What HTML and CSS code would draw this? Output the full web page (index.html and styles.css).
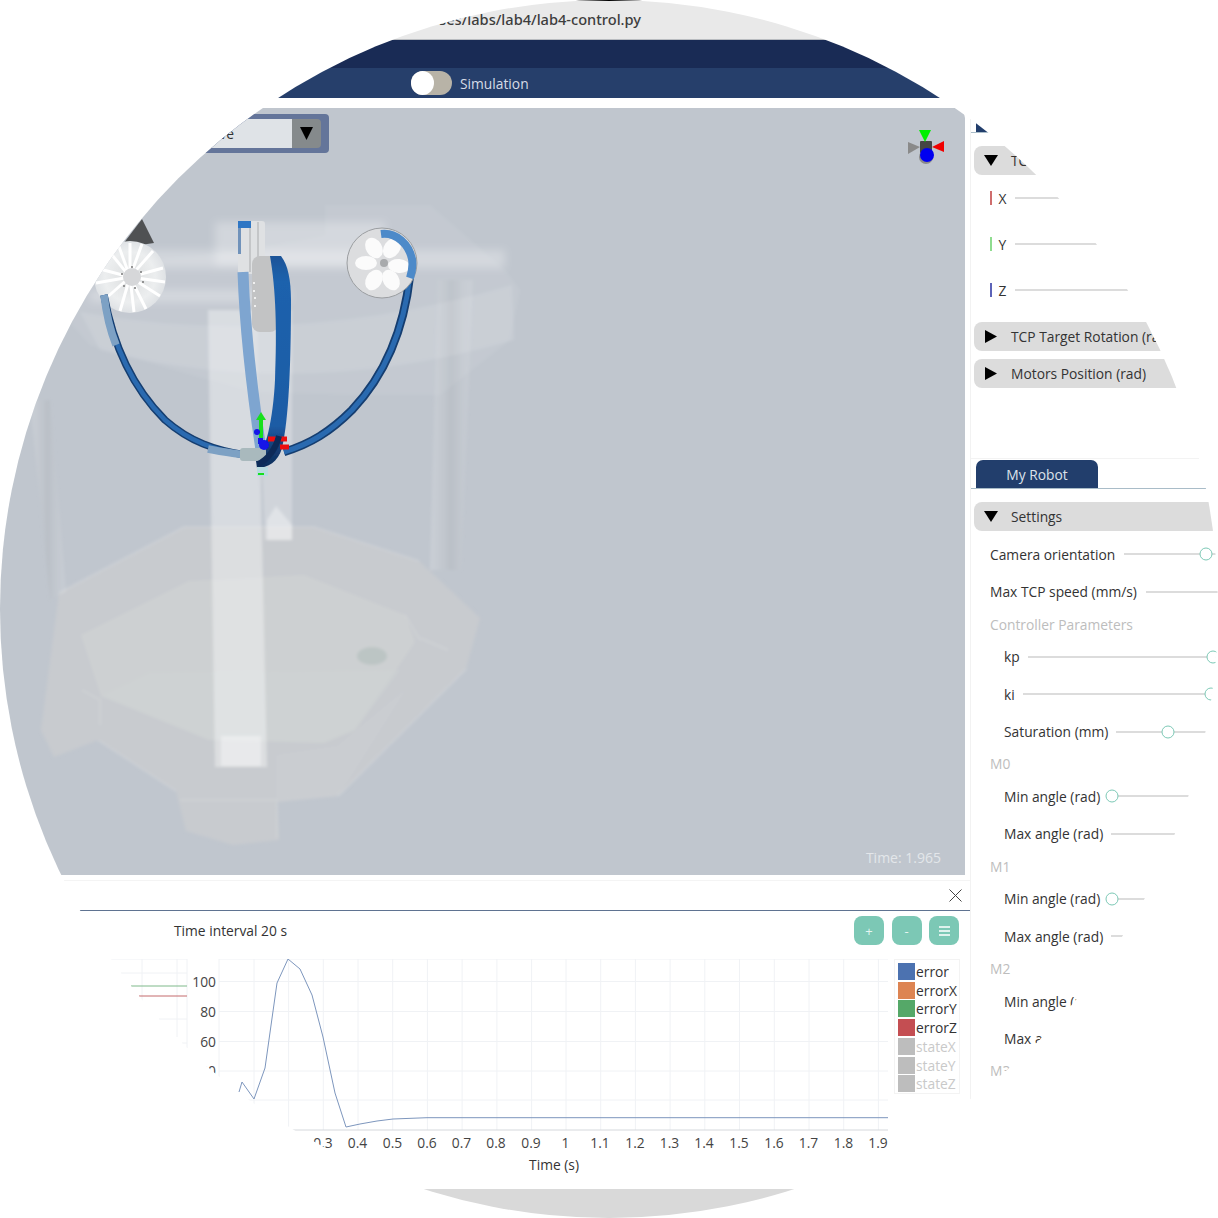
FILE: index.html
```html
<!DOCTYPE html>
<html lang="en">
<head>
<meta charset="utf-8">
<title>lab4-control</title>
<link rel="stylesheet" href="styles.css">
</head>
<body>
<div class="screen">
  <div class="topline"></div>
  <div class="pathbar"><span>courses/labs/lab4/lab4-control.py</span></div>
  <div class="navy"></div>
  <div class="simbar">
    <span class="toggle"><span class="knob"></span></span>
    <span class="simlabel">Simulation</span>
  </div>
  <div class="workspace">
    <div class="leftcol">
      <div class="viewer">
        <svg class="scene" width="965" height="767" viewBox="0 108 965 767">
          <defs>
            <filter id="soft"><feGaussianBlur stdDeviation="0.6"/></filter>
            <filter id="softer"><feGaussianBlur stdDeviation="1.6"/></filter>
            <filter id="haze"><feGaussianBlur stdDeviation="4"/></filter>
            <linearGradient id="column" x1="0" x2="1" y1="0" y2="0">
              <stop offset="0" stop-color="#fff" stop-opacity=".16"/>
              <stop offset=".5" stop-color="#a4a9ae" stop-opacity=".22"/>
              <stop offset="1" stop-color="#fff" stop-opacity=".1"/>
            </linearGradient>
            <linearGradient id="band" x1="0" x2="0" y1="0" y2="1">
              <stop offset="0" stop-color="#1a5498"/>
              <stop offset=".12" stop-color="#1e62ad"/>
              <stop offset=".8" stop-color="#1d5ca5"/>
              <stop offset=".9" stop-color="#143f78"/>
              <stop offset="1" stop-color="#0e2c58"/>
            </linearGradient>
            <radialGradient id="burst" cx=".5" cy=".5" r=".5">
              <stop offset="0" stop-color="#dcdedf"/>
              <stop offset=".7" stop-color="#eceeef"/>
              <stop offset="1" stop-color="#dfe2e5"/>
            </radialGradient>
          </defs>
          <g filter="url(#softer)">
            <polygon class="lower" points="184,527 314,527 419,561 480,618 466,669 338,796 277,802 279,840 233,845 186,831 176,791 98,740 54,757 41,730 59,593"/>
            <polygon class="plate" points="81,635 189,581 304,575 405,615 415,642 355,730 324,743 209,740 101,696"/>
            <polygon class="plate2" points="101,696 150,672 400,670 355,730 324,743 209,740"/>
            <ellipse class="dot" cx="372" cy="656" rx="15" ry="9"/>
            <path class="edge" d="M59 593L184 527H314L419 561M405 615L420 640M466 669L338 796M278 800H180M98 740L176 791M82 690L100 700L100 725M277 802V838M420 638L448 650"/>
            <polygon class="footblock" points="277,755 338,746 405,690 338,796 277,802"/>
            <polygon class="column" points="30,400 50,400 66,592 50,600"/>
            <polygon class="column" points="438,280 473,280 461,570 430,570"/>
            <polygon class="upper" points="325,205 430,205 505,270 520,290 510,340 440,395 360,395 250,392 90,345 50,300 105,265 250,250 325,235"/>
            <path class="rim" d="M80 312 Q290 350 512 285 L514 340 Q300 402 100 350Z"/>
            <polygon class="plank" points="208,310 257,310 267,767 215,767"/>
            <polygon class="plank2" points="256,310 292,310 292,540 265,540"/>
            <rect class="brightblock" x="221" y="736" width="40" height="30"/>
            <polygon class="brightblock" points="267,520 276,506 292,525 292,540 267,540"/>
          </g>
          <g filter="url(#haze)">
            <rect class="glow" x="105" y="250" width="400" height="18"/>
            <rect class="glow" x="215" y="222" width="170" height="44"/>
            <rect class="glow" x="90" y="290" width="200" height="12"/>
          </g>
          <g filter="url(#soft)">
            <polygon class="cone" points="142,219 154,243 120,248"/>
            <circle class="disc" cx="130" cy="277" r="36"/>
            <g class="spokes">
              <path d="M130 277L130 243M130 277L142 244M130 277L153 251M130 277L163 268M130 277L165 282M130 277L160 296M130 277L146 309M130 277L134 312M130 277L120 311M130 277L104 300M130 277L96 283M130 277L96 268M130 277L108 250M130 277L118 244"/>
            </g>
            <circle class="hub" cx="132" cy="277" r="9"/>
            <g class="pins">
              <circle cx="132" cy="267" r="1"/><circle cx="141" cy="272" r="1"/><circle cx="143" cy="282" r="1"/><circle cx="135" cy="288" r="1"/><circle cx="124" cy="286" r="1"/><circle cx="122" cy="274" r="1"/>
            </g>
            <path class="cable-edge" d="M104 295C112 340 130 385 165 420C190 442 215 450 245 455"/>
            <path class="cable-left" d="M104 295C112 340 130 385 165 420C190 442 215 450 245 455"/>
            <path class="cable-left-light" d="M104 295C106 312 110 330 116 345M208 449C222 452 232 453 245 455"/>
            <path class="cable-edge wide" d="M410 275C404 330 385 375 352 410C330 432 310 444 284 452"/>
            <path class="cable-right" d="M410 275C404 330 385 375 352 410C330 432 310 444 284 452"/>
            <rect class="motorback" x="238" y="221" width="27" height="53" rx="3"/>
            <path class="motorshade" d="M250 222V272M258 222V262"/>
            <rect class="patch" x="238" y="221" width="13" height="7"/>
            <rect class="strip-light" x="238" y="228" width="3" height="26"/>
            <path class="strap" d="M243 272C245 330 252 390 261 450"/>
            <rect class="motorface" x="252" y="256" width="26" height="76" rx="8"/>
            <circle class="tick" cx="254" cy="283" r="1"/><circle class="tick" cx="254" cy="291" r="1"/><circle class="tick" cx="255" cy="298" r="1"/><circle class="tick" cx="255" cy="306" r="1"/>
            <path class="thickband" d="M270 256H281C288 265 291 280 291 300C291 360 289 420 282 448C278 462 268 468 257 468L256 461C266 450 273 420 275 380C277 330 276 290 270 256Z"/>
            <rect class="connector" x="240" y="448" width="26" height="13" rx="3"/>
            <rect class="lowertip" x="257" y="467" width="11" height="9"/>
            <path class="greenaxis" d="M261 440V418"/><polygon class="greentip" points="261,412 266,420 256,420"/>
            <path class="tipmark" d="M258 474H264"/>
            <circle class="blueblob" cx="264" cy="445" r="5"/><circle class="blueblob" cx="257" cy="432" r="3"/><rect class="blueblob" x="258" y="438" width="5" height="6"/>
            <path class="redaxis" d="M268 439H287M280 447H289"/>
            <path class="thickband-front" d="M258 464C268 460 276 448 279 436"/>
            <circle class="rmotor" cx="382" cy="263" r="35"/>
            <g class="petals">
              <ellipse cx="392" cy="248" rx="8" ry="11" transform="rotate(35 392 248)"/>
              <ellipse cx="399" cy="266" rx="7" ry="11" transform="rotate(95 399 266)"/>
              <ellipse cx="391" cy="280" rx="8" ry="11" transform="rotate(150 391 280)"/>
              <ellipse cx="374" cy="280" rx="8" ry="11" transform="rotate(30 374 280)"/>
              <ellipse cx="366" cy="263" rx="7" ry="11" transform="rotate(90 366 263)"/>
              <ellipse cx="374" cy="248" rx="8" ry="11" transform="rotate(-30 374 248)"/>
            </g>
            <circle class="hub2" cx="384" cy="263" r="4"/>
            <path class="rarc" d="M381 234C397 232 409 245 412 259C413 265 412 272 410 278"/>
          </g>
        </svg>
        <div class="camselect">
          <div class="camfield">Perspective</div>
          <div class="camcaret"><svg width="13" height="13" viewBox="0 0 13 13"><polygon points="0,0 13,0 6.5,13"/></svg></div>
        </div>
        <svg class="gizmo" width="40" height="40" viewBox="906 127 40 40">
          <circle class="g-gray" cx="926" cy="157" r="7"/>
          <polygon class="g-gray" points="908,142 920,147 908,154"/>
          <rect class="g-dark" x="920" y="141" width="12" height="12" rx="1"/>
          <polygon class="g-green" points="919,130 931,130 925,142"/>
          <polygon class="g-red" points="944,141 944,152 932,147"/>
          <circle class="g-blue" cx="927" cy="155" r="7"/>
        </svg>
        <div class="timestamp">Time: 1.965</div>
      </div>
      <div class="chartpanel">
        <div class="closerow">
          <svg class="closeicon" width="13" height="13" viewBox="0 0 13 13"><path d="M0.5 0.5L12.5 12.5M12.5 0.5L0.5 12.5"/></svg>
        </div>
        <div class="toolbar">
          <span class="interval">Time interval 20 s</span>
          <div class="tools">
            <button class="tool">+</button>
            <button class="tool">-</button>
            <button class="tool menu"><svg width="11" height="10" viewBox="0 0 11 10"><path d="M0 1H11M0 5H11M0 9H11"/></svg></button>
          </div>
        </div>
        <div class="chartrow">
          <svg class="plot" width="889" height="216" viewBox="0 959 889 216">
            <path class="grid" d="M111 959H187M121 973H187M159 1019H187M182 1043H187M142 959V1037M177 959V1037M187 959V1048"/>
            <path class="trace-green" d="M131 986H187"/>
            <path class="trace-red" d="M139 996H187"/>
            <path class="grid" d="M219 959H888M219 981.5H888M219 1011.5H888M219 1041.5H888M219 1071H888M219 1100H888M219 959V1130M254 959V1130M288.6 959V1130M323.3 959V1130M358 959V1130M392.7 959V1130M427.4 959V1130M462.1 959V1130M496.9 959V1130M531.6 959V1130M566 959V1130M600.7 959V1130M635.4 959V1130M670.1 959V1130M704.8 959V1130M739.5 959V1130M774.3 959V1130M809 959V1130M843.7 959V1130M878.4 959V1130"/>
            <path class="axis" d="M219 1130H888"/>
            <path class="trace" d="M239 1092L242 1082L254 1099L265 1068L277 983L288 959L300 969L312 995L323 1037L335 1093L346 1127L360 1124L377 1121L393 1119L427 1117.7H888"/>
            <g class="ylabels">
              <text x="216" y="987">100</text><text x="216" y="1017">80</text><text x="216" y="1047">60</text><text x="216" y="1076">40</text>
            </g>
            <g class="xlabels">
              <text x="323" y="1148">0.3</text><text x="357.5" y="1148">0.4</text><text x="392.5" y="1148">0.5</text><text x="427" y="1148">0.6</text><text x="461.5" y="1148">0.7</text><text x="496" y="1148">0.8</text><text x="531" y="1148">0.9</text><text x="565.5" y="1148">1</text><text x="600" y="1148">1.1</text><text x="635" y="1148">1.2</text><text x="669.5" y="1148">1.3</text><text x="704" y="1148">1.4</text><text x="739" y="1148">1.5</text><text x="774" y="1148">1.6</text><text x="808.5" y="1148">1.7</text><text x="843.5" y="1148">1.8</text><text x="878" y="1148">1.9</text>
            </g>
            <text class="xtitle" x="554" y="1170">Time (s)</text>
          </svg>
          <div class="legend">
            <div class="entry"><i class="sw c1"></i>error</div>
            <div class="entry"><i class="sw c2"></i>errorX</div>
            <div class="entry"><i class="sw c3"></i>errorY</div>
            <div class="entry"><i class="sw c4"></i>errorZ</div>
            <div class="entry off"><i class="sw"></i>stateX</div>
            <div class="entry off"><i class="sw"></i>stateY</div>
            <div class="entry off"><i class="sw"></i>stateZ</div>
          </div>
        </div>
      </div>
    </div>
    <aside class="sidepanel">
      <div class="tabstrip first"><div class="tab"></div></div>
      <div class="acc first-acc"><svg class="tri" width="14" height="12" viewBox="0 0 14 12"><polygon points="0,0 14,0 7,11"/></svg><span>TCP Target Position (mm)</span></div>
      <div class="axisrow"><i class="mark red"></i><span class="axisname">X</span><span class="track"></span></div>
      <div class="axisrow"><i class="mark green"></i><span class="axisname">Y</span><span class="track"></span></div>
      <div class="axisrow"><i class="mark blue"></i><span class="axisname">Z</span><span class="track"></span></div>
      <div class="acc gap9"><svg class="tri" width="14" height="13" viewBox="0 0 14 13"><polygon points="1,0 13,6.5 1,13"/></svg><span>TCP Target Rotation (rad)</span></div>
      <div class="acc gap8"><svg class="tri" width="14" height="13" viewBox="0 0 14 13"><polygon points="1,0 13,6.5 1,13"/></svg><span>Motors Position (rad)</span></div>
      <div class="tabstrip second"><div class="tab">My Robot</div></div>
      <div class="acc settings"><svg class="tri" width="14" height="12" viewBox="0 0 14 12"><polygon points="0,0 14,0 7,11"/></svg><span>Settings</span></div>
      <div class="rows">
        <div class="row"><span>Camera orientation</span><span class="track"><b class="thumb" style="left:87%"></b></span></div>
        <div class="row"><span>Max TCP speed (mm/s)</span><span class="track"></span></div>
        <div class="grouplabel">Controller Parameters</div>
        <div class="row sub"><span>kp</span><span class="track"><b class="thumb" style="left:97.4%"></b></span></div>
        <div class="row sub"><span>ki</span><span class="track"><b class="thumb" style="left:96.4%"></b></span></div>
        <div class="row sub"><span>Saturation (mm)</span><span class="track"><b class="thumb" style="left:51%"></b></span></div>
        <div class="grouplabel">M0</div>
        <div class="row sub"><span>Min angle (rad)</span><span class="track"><b class="thumb" style="left:3.6%"></b></span></div>
        <div class="row sub"><span>Max angle (rad)</span><span class="track"></span></div>
        <div class="grouplabel">M1</div>
        <div class="row sub"><span>Min angle (rad)</span><span class="track"><b class="thumb" style="left:3.6%"></b></span></div>
        <div class="row sub"><span>Max angle (rad)</span><span class="track"></span></div>
        <div class="grouplabel">M2</div>
        <div class="row sub"><span>Min angle (rad)</span><span class="track"></span></div>
        <div class="row sub"><span>Max angle (rad)</span><span class="track"></span></div>
        <div class="grouplabel">M3</div>
      </div>
    </aside>
  </div>
  <div class="bottomstrip"></div>
</div>
</body>
</html>
```
FILE: styles.css
```css
* { box-sizing: border-box; }
html, body { margin: 0; padding: 0; background: #fff; }
body { font-family: "Open Sans", "Noto Sans", sans-serif; color: #333; font-size: 13.8px; }
.screen {
  width: 1218px; height: 1218px; overflow: hidden; background: #fff;
  display: flex; flex-direction: column;
  clip-path: circle(609px at 609px 609px);
}
.topline { height: 1px; background: #000; flex: none; }
.pathbar {
  height: 39px; flex: none; background: #e9e9e9; border-bottom: 1px solid #b9bcc0;
  display: flex; justify-content: flex-end; align-items: center; padding: 0 577px 2px 0;
  font-family: "Noto Sans", sans-serif; font-weight: 500; font-size: 14.6px; color: #3d3d3d;
}
.navy { height: 28px; flex: none; background: #192b55; }
.simbar {
  height: 30px; flex: none; background: #263f6b; display: flex; align-items: center;
  padding-left: 411px; gap: 8px;
}
.toggle { width: 41px; height: 24px; border-radius: 12px; background: #b8b3a7; display: block; }
.knob { display: block; width: 23px; height: 24px; border-radius: 50%; background: #fff; }
.simlabel { color: #d6dce6; font-size: 13.8px; }

.workspace { flex: none; height: 1081px; margin-top: 10px; display: flex; }
.leftcol { width: 970px; flex: none; display: flex; flex-direction: column; }
.viewer { width: 965px; height: 767px; flex: none; background: #c0c6ce; position: relative; border-radius: 0 10px 0 0; overflow: hidden; }
.scene { display: block; }
.lower { fill: #c8cbcf; }
.plate { fill: #cdd0d2; }
.plate2 { fill: #d0d4d4; fill-opacity: .4; }
.dot { fill: #bcc5c4; }
.edge { fill: none; stroke: #fff; stroke-opacity: .12; stroke-width: 2; }
.footblock { fill: #fff; fill-opacity: .05; }
.column { fill: url(#column); }
.upper { fill: #fff; fill-opacity: .06; }
.rim { fill: #fff; fill-opacity: .1; }
.glow { fill: #fff; fill-opacity: .28; }
.plank { fill: #fff; fill-opacity: .36; }
.plank2 { fill: #fff; fill-opacity: .25; }
.brightblock { fill: #fff; fill-opacity: .35; }
.cone { fill: #4f5153; }
.disc { fill: url(#burst); }
.spokes path { stroke: #fff; stroke-width: 3; fill: none; }
.hub { fill: #d6d7d9; }
.pins circle { fill: #777; }
.cable-edge { fill: none; stroke: #153e70; stroke-width: 7.5; }
.cable-edge.wide { stroke-width: 8.5; }
.cable-left { fill: none; stroke: #2a6bb0; stroke-width: 4.5; }
.cable-left-light { fill: none; stroke: #7da1c4; stroke-width: 7.5; }
.cable-right { fill: none; stroke: #2a6bb0; stroke-width: 5; }
.motorback { fill: #dfe1e3; }
.motorshade { stroke: #c4c6c8; stroke-width: 2; fill: none; }
.patch { fill: #2f76c4; }
.strip-light { fill: #6f92ba; }
.strap { fill: none; stroke: #7ea5d0; stroke-width: 11; }
.motorface { fill: #c2c3c4; }
.tick { fill: #fff; }
.thickband { fill: url(#band); }
.connector { fill: #a9b9bd; }
.lowertip { fill: #b9dbe0; }
.greenaxis { stroke: #19e01f; stroke-width: 4; }
.greentip { fill: #19e01f; }
.tipmark { stroke: #19e01f; stroke-width: 2; }
.blueblob { fill: #1212e8; }
.redaxis { stroke: #ee1111; stroke-width: 5; }
.thickband-front { stroke: #0e2c58; stroke-width: 6; fill: none; }
.rmotor { fill: #dcdddf; stroke: #9a9da0; stroke-width: 1; }
.petals ellipse { fill: #fbfbfb; }
.hub2 { fill: #a8aaac; }
.rarc { fill: none; stroke: #4e8ac9; stroke-width: 8; }

.camselect {
  position: absolute; left: 120px; top: 6px; width: 209px; height: 39px;
  background: #64759a; border-radius: 4px; padding: 5px 8px 5px 5px; display: flex;
}
.camfield { flex: 1; background: #dfe3e7; font-size: 13.8px; line-height: 30px; padding-left: 35px; color: #333; }
.camcaret { width: 29px; background: #858a8c; border-radius: 0 4px 4px 0; display: flex; align-items: center; justify-content: center; }
.camcaret polygon { fill: #000; }
.gizmo { position: absolute; left: 906px; top: 19px; }
.g-gray { fill: #8a8a8a; }
.g-dark { fill: #454545; }
.g-green { fill: #00f000; }
.g-red { fill: #f00000; }
.g-blue { fill: #0000f0; }
.timestamp { position: absolute; right: 24px; bottom: 8px; color: #e3e6ea; font-size: 14px; }

.chartpanel { margin-top: 5px; border-top: 1px solid #f4f4f4; flex: none; position: relative; }
.closerow { height: 30px; border-bottom: 1px solid #5f7391; display: flex; justify-content: flex-end; align-items: center; padding-right: 8px; }
.closeicon path { stroke: #444; stroke-width: 1; fill: none; }
.toolbar { height: 48px; display: flex; justify-content: space-between; align-items: flex-start; padding: 5px 11px 0 174px; }
.interval { line-height: 30px; font-size: 13.8px; color: #333; }
.tools { display: flex; gap: 7.5px; }
.tool {
  width: 30px; height: 29px; border: 0; border-radius: 8px; background: #7cc8b5; color: #e6f5f1;
  font: 13px "Open Sans", sans-serif; padding: 0; display: flex; align-items: center; justify-content: center;
}
.menu path { stroke: #fff; stroke-width: 1.6; fill: none; }
.chartrow { display: flex; align-items: flex-start; gap: 5px; }
.plot { display: block; flex: none; }
.grid { stroke: #f0f2f5; stroke-width: 1; fill: none; }
.axis { stroke: #d5d8dc; stroke-width: 1; fill: none; }
.trace { stroke: #7d96bd; stroke-width: 1; fill: none; }
.trace-green { stroke: #7fb98a; stroke-width: 1; }
.trace-red { stroke: #c46a6d; stroke-width: 1; }
.ylabels text { text-anchor: end; font-size: 13.8px; fill: #444; }
.xlabels text { text-anchor: middle; font-size: 13.8px; fill: #444; }
.xtitle { text-anchor: middle; font-size: 13.8px; fill: #333; }
.legend { width: 66px; height: 135px; border: 1px solid #f3f3f3; padding: 2px 0 0 3px; flex: none; }
.entry { height: 18.75px; display: flex; align-items: center; font-size: 13.8px; color: #333; line-height: 17px; }
.entry.off { color: #c9c9c9; }
.sw { width: 17px; height: 17px; margin-right: 1px; background: #bdbdbd; flex: none; }
.c1 { background: #4c72b0; }
.c2 { background: #dd8452; }
.c3 { background: #55a868; }
.c4 { background: #c44e52; }

.sidepanel { flex: 1; border-left: 1px solid #f2f2f2; height: 992px; min-width: 0; }
.tabstrip { border-bottom: 1px solid #a9bcc8; padding-left: 5px; display: flex; align-items: flex-end; }
.tabstrip.first { height: 25px; }
.tabstrip.second { height: 31px; margin-top: 70px; border-top: 1px solid #f3f3f3; margin-right: 12px; padding-top: 1px; }
.tab { width: 122px; height: 100%; background: #223e6c; border-radius: 7px 7px 0 0; color: #dce2ea; text-align: center; line-height: 29px; font-size: 13.8px; }
.acc {
  height: 29px; margin-left: 3px; background: #dcdcdc; border-radius: 8px 0 0 8px;
  display: flex; align-items: center; padding-left: 10px; font-size: 13.8px; color: #333; white-space: nowrap;
}
.first-acc { margin-top: 13px; }
.gap9 { margin-top: 9px; }
.gap8 { margin-top: 8px; }
.settings { margin-top: 13px; }
.tri { flex: none; margin-right: 13px; }
.tri polygon { fill: #000; }
.axisrow { height: 46px; display: flex; align-items: center; padding-left: 19px; }
.mark { width: 1.5px; height: 14px; margin-right: 7px; flex: none; }
.mark.red { background: #cf6d6d; }
.mark.green { background: #8fdc8f; }
.mark.blue { background: #5c63b8; }
.axisname { width: 16px; flex: none; color: #333; }
.track { flex: 1; height: 2px; background: #dcdcdc; position: relative; min-width: 0; display: block; }
.rows { margin-top: 4.8px; }
.row { height: 37.4px; display: flex; align-items: center; padding-left: 19px; gap: 9px; white-space: nowrap; color: #333; }
.row.sub { padding-left: 33px; gap: 8px; }
.grouplabel { height: 27.5px; line-height: 27.5px; padding-left: 19px; color: #bdbdbd; font-size: 13.8px; }
.thumb {
  position: absolute; top: 50%; width: 13px; height: 13px; border-radius: 50%;
  background: #fff; border: 1.5px solid #7cc8b5; transform: translate(-50%, -50%);
}
.bottomstrip { height: 29px; flex: none; background: #d9d9d9; }
```
